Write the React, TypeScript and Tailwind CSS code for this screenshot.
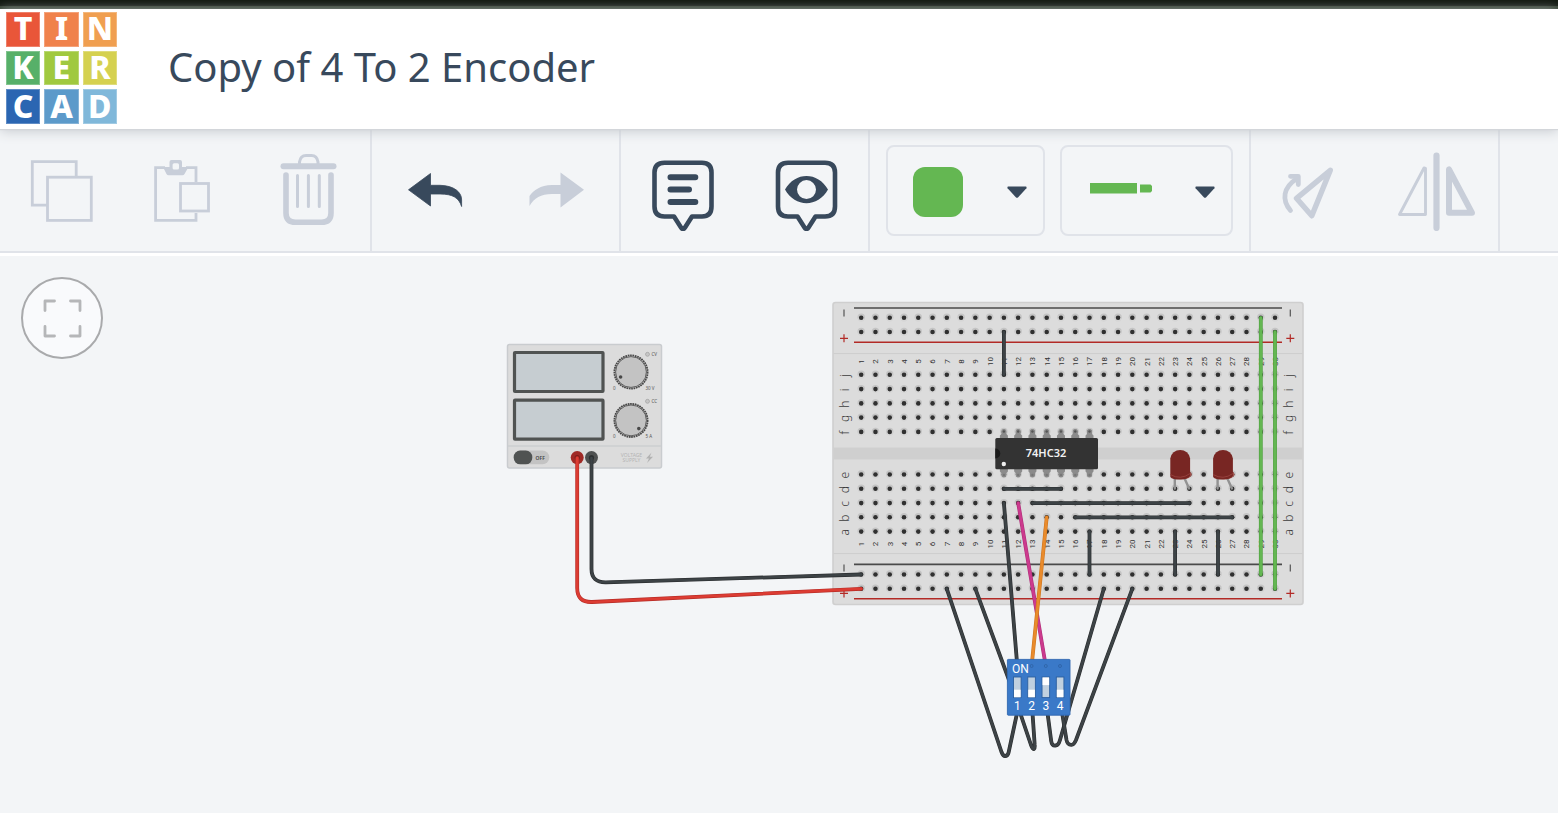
import React from "react";

const LOGO = [
  { letter: "T", tile: "bg-[#e95639]" },
  { letter: "I", tile: "bg-[#f0824c]" },
  { letter: "N", tile: "bg-[#f09f50]" },
  { letter: "K", tile: "bg-[#57b069]" },
  { letter: "E", tile: "bg-[#a0c93f]" },
  { letter: "R", tile: "bg-[#d5d150]" },
  { letter: "C", tile: "bg-[#2b66b2]" },
  { letter: "A", tile: "bg-[#5c9aca]" },
  { letter: "D", tile: "bg-[#80b8da]" },
];

function Logo() {
  return (
    <a
      href="#"
      aria-label="Tinkercad"
      className="grid h-28 w-[111px] shrink-0 grid-cols-3 grid-rows-3 gap-1"
    >
      {LOGO.map((t) => (
        <span
          key={t.letter}
          className={`flex items-center justify-center border border-white/25 pb-[2px] font-['Noto_Sans',sans-serif] text-[32px] leading-8 font-extrabold text-white ${t.tile}`}
        >
          {t.letter}
        </span>
      ))}
    </a>
  );
}

type ToolProps = {
  label: string;
  x: number;
  disabled?: boolean;
  children: React.ReactNode;
};

/* Every tool glyph is drawn on an 81-unit square whose origin is (x, 150). */
function Tool({ label, x, disabled, children }: ToolProps) {
  return (
    <button
      type="button"
      aria-label={label}
      title={label}
      disabled={disabled}
      className={`flex w-[123px] items-center justify-center ${disabled ? "text-[#c8ced9]" : "text-[#38495c]"}`}
    >
      <svg viewBox={`${x} 150 81 81`} className="size-[81px]" fill="none" stroke="currentColor" aria-hidden="true">
        {children}
      </svg>
    </button>
  );
}

function Group({ children }: { children: React.ReactNode }) {
  return <div className="flex border-r-2 border-[#e0e3e9]">{children}</div>;
}

function Caret() {
  return (
    <svg viewBox="0 0 20 12" className="h-3 w-5" aria-hidden="true">
      <path d="M1.2 0.6H18.8Q20 0.8 19.4 2.2L11.2 11.2Q10 12.2 8.8 11.2L0.6 2.2Q0 0.8 1.2 0.6Z" fill="#38495c" />
    </svg>
  );
}

function Toolbar() {
  return (
    <div
      role="toolbar"
      aria-label="Circuit tools"
      className="flex h-[124px] border-b-2 border-[#e0e3e9] bg-[#f3f5f7]"
    >
      <Group>
        <Tool label="Copy" x={21} disabled>
          <path d="M76.2 176.5V161.7H32.3V205.2H47" strokeWidth="2.8" />
          <rect x="47.5" y="177.2" width="43.8" height="43.2" strokeWidth="2.8" />
        </Tool>
        <div className="flex w-[124px]">
          <Tool label="Paste" x={144} disabled>
            <path d="M165 167.7H155.6V220.4H196V213M196 182V167.7H186" strokeWidth="2.8" />
            <rect x="180.5" y="183.5" width="28" height="27.5" strokeWidth="2.8" />
            <path
              d="M163 167H169.5V162Q169.5 160 171.5 160H180Q182 160 182 162V167H188.5L184.5 174Q183.8 175.3 182.5 175.3H168.5Q167.2 175.3 166.5 174Z"
              fill="currentColor"
              stroke="none"
            />
            <rect x="172.6" y="163.2" width="6.4" height="6.4" rx="1.5" fill="#f3f5f7" stroke="none" />
          </Tool>
        </div>
        <Tool label="Delete" x={268} disabled>
          <path d="M299.5 165V162Q300.5 155.5 306 155.5H311.5Q317 155.5 318 162V165" strokeWidth="3" />
          <path d="M283.5 166.3H333.5" strokeWidth="6" strokeLinecap="round" />
          <path d="M286 175V213Q286 222.3 295.5 222.3H321.5Q331 222.3 331 213V175" strokeWidth="5.6" strokeLinecap="round" />
          <path d="M297.5 175.5V206.5M308.4 175.5V206.5M319.3 175.5V206.5" strokeWidth="3" strokeLinecap="round" />
        </Tool>
      </Group>

      <Group>
        <Tool label="Undo" x={393}>
          <path
            d="M408.5 189.8L430.5 173.5V185.3H440C454 185.5 462 192.5 461.6 200V206.5C459 198 453 194 440 194H430.5V206Z"
            fill="currentColor"
            strokeWidth="0.8"
            strokeLinejoin="round"
          />
        </Tool>
        <div className="flex w-[124px]">
          <Tool label="Redo" x={516} disabled>
            <path
              d="M584 189.8L560.5 172.5V185H552C540 185.5 534 190 529.5 196V206C534 198 541 194 552 194H560.5V207.5Z"
              fill="currentColor"
              stroke="none"
            />
          </Tool>
        </div>
      </Group>

      <Group>
        <Tool label="Notes" x={642}>
          <path
            d="M664.5 162.7H702Q711.500 162.700 711.500 172.500V206.500Q711.500 216.500 702 216.500H692L685 227.500Q683 230.500 681 227.500L674 216.500H664.500Q654.500 216.500 654.500 206.500V172.500Q654.500 162.700 664.500 162.700Z"
            strokeWidth="4.6"
            strokeLinejoin="round"
          />
          <path d="M670.5 177.3H695.3M670.5 189.6H689M670.5 202H695.3" strokeWidth="6" strokeLinecap="round" />
        </Tool>
        <div className="flex w-[124px]">
          <Tool label="Toggle notes visibility" x={765}>
            <path
              d="M788 162.700H825Q835 162.700 835 172.500V206.500Q835 216.500 825 216.500H815.500L808.500 227.500Q806.500 230.500 804.500 227.500L797.500 216.500H788Q778 216.500 778 206.500V172.500Q778 162.700 788 162.700Z"
              strokeWidth="4.6"
              strokeLinejoin="round"
            />
            <path
              fillRule="evenodd"
              d="M785 189.6C795 171.5 818 171.5 828 189.6C818 207.8 795 207.8 785 189.6ZM797 189.6A9.5 9.5 0 1 0 816 189.6A9.5 9.5 0 1 0 797 189.6Z"
              fill="currentColor"
              stroke="none"
            />
          </Tool>
        </div>
      </Group>

      <Group>
        <div className="flex items-center gap-[15px] px-4">
          <button
            type="button"
            aria-label="Wire color"
            aria-haspopup="listbox"
            className="flex h-[91px] w-[159px] items-center justify-between rounded-lg border-2 border-[#e0e3e9] pt-1 pr-4 pl-[25px]"
          >
            <span className="size-[50px] rounded-xl bg-[#64b752]" />
            <Caret />
          </button>
          <button
            type="button"
            aria-label="Wire type"
            aria-haspopup="listbox"
            className="flex h-[91px] w-[173px] items-center justify-between rounded-lg border-2 border-[#e0e3e9] pt-1 pr-4 pl-7"
          >
            <svg viewBox="0 0 62 18" className="h-[18px] w-[62px]" fill="#64b752" aria-hidden="true">
              <rect x="0" y="0" width="47" height="10.5" />
              <path d="M50 1.5H60.5L62 3V8L60.5 9.5H50Z" />
            </svg>
            <Caret />
          </button>
        </div>
      </Group>

      <Group>
        <Tool label="Rotate" x={1272} disabled>
          <path d="M1330.300 170.300L1296.500 198.300L1311.800 215.800Z" strokeWidth="5.4" strokeLinejoin="round" />
          <path d="M1290.500 210.500C1281.500 200 1283 187.500 1297 178.500" strokeWidth="4.8" strokeLinecap="round" />
          <path d="M1290.500 176.300H1298.300V184.500" strokeWidth="4.8" strokeLinecap="round" strokeLinejoin="round" />
        </Tool>
        <div className="flex w-[124px]">
          <Tool label="Mirror" x={1395} disabled>
            <path d="M1425.500 168.500V214.500H1399.500L1424 168Z" strokeWidth="2.9" strokeLinejoin="round" />
            <path d="M1436.500 155.500V228" strokeWidth="6.2" strokeLinecap="round" />
            <path d="M1449 169.500V212.800H1472Z" strokeWidth="6" strokeLinejoin="round" />
          </Tool>
        </div>
      </Group>
    </div>
  );
}

const PITCH = 14.27;
const colX = (n: number) => 861.2 + (n - 1) * PITCH;
const COLS = Array.from({ length: 30 }, (_, i) => i + 1);
const ROWS: [string, number][] = [
  ["j", 374.8],
  ["i", 389.1],
  ["h", 403.4],
  ["g", 417.6],
  ["f", 431.9],
  ["e", 474.5],
  ["d", 488.8],
  ["c", 503.1],
  ["b", 517.3],
  ["a", 531.6],
];
const RAILS = [317.8, 332, 574.5, 588.8];
const HOLE_ROWS = [...RAILS, ...ROWS.map((r) => r[1])];

function Breadboard() {
  return (
    <g>
      <rect x="833" y="302.500" width="470" height="302" rx="2.5" fill="#dcdcdc" stroke="#cfcfcf" strokeWidth="1.6" />
      <rect x="833.5" y="447.5" width="469" height="12" fill="#cfcfcf" />
      <path d="M833.5 353.600H1302.500M833.500 553.600H1302.500" stroke="#cdcdcd" />
      <path d="M854 308H1282M854 564.400H1282" stroke="#4a4a4a" strokeWidth="1.6" />
      <path d="M854 342.200H1282M854 598.800H1282" stroke="#b22a26" strokeWidth="1.4" />
      {HOLE_ROWS.map((y) =>
        COLS.map((n) => (
          <g key={`${n}-${y}`}>
            <circle cx={colX(n)} cy={y - 0.5} r="3.7" fill="#c4c4c4" />
            <circle cx={colX(n)} cy={y + 1} r="3" fill="#d6d6d6" />
            <circle cx={colX(n)} cy={y} r="2.3" fill="#303030" />
          </g>
        )),
      )}
      <g fill="#333" fontSize="8" textAnchor="middle" fontFamily="Roboto, sans-serif">
        {[361.6, 544].map((y) =>
          COLS.map((n) => (
            <text key={`${n}-${y}`} transform={`translate(${colX(n) + 2.9} ${y}) rotate(-90)`}>
              {n}
            </text>
          )),
        )}
      </g>
      <g fill="#3c3c3c" fontSize="12" textAnchor="middle" fontWeight="300">
        {ROWS.map(([name, y]) => (
          <React.Fragment key={name}>
            <text transform={`translate(849 ${y + 0.8}) rotate(-90)`}>{name}</text>
            <text transform={`translate(1293 ${y + 0.8}) rotate(-90)`}>{name}</text>
          </React.Fragment>
        ))}
      </g>
      <path d="M844 309.500V316.500M1290.300 309.500V316.500M844 564.500V571.500M1290.300 564.500V571.500" stroke="#555" strokeWidth="1.2" />
      <path
        d="M840 338.300H848M844 334.300V342.300M1286.300 338.300H1294.300M1290.300 334.300V342.300M840 593.400H848M844 589.400V597.400M1286.300 593.400H1294.300M1290.300 589.400V597.400"
        stroke="#b22a26"
        strokeWidth="1.2"
      />
    </g>
  );
}

function OrGateChip() {
  return (
    <g>
      {[11, 12, 13, 14, 15, 16, 17].map((n) => (
        <g key={n} transform={`translate(${colX(n)} 0)`}>
          <path d="M-4 439V435.500L-2.500 434V431.500A2.500 2.500 0 0 1 2.500 431.500V434L4 435.500V439Z" fill="#8b8b8b" />
          <path d="M-4 468V471.500L-2.500 473V475A2.500 2.500 0 0 0 2.500 475V473L4 471.500V468Z" fill="#8b8b8b" />
          <circle cy="431.5" r="1.2" fill="#555" />
          <circle cy="475" r="1.2" fill="#777" />
        </g>
      ))}
      <rect x="995.3" y="438" width="102.7" height="31.2" rx="1.5" fill="#333" />
      <path d="M995.3 448.500A5 5 0 0 1 995.300 458.500Z" fill="#1a1a1a" />
      <circle cx="1003.800" cy="464" r="2.2" fill="#ededed" />
      <text x="1046" y="457.3" textAnchor="middle" fontSize="11" fontWeight="600" fill="#f2f2f2">
        74HC32
      </text>
    </g>
  );
}

function Led({ x }: { x: number }) {
  return (
    <g transform={`translate(${x} 0)`}>
      <path d="M-5.5 479V488.500M4.500 479L8.800 488.500" stroke="#929292" strokeWidth="2.4" fill="none" strokeLinecap="round" />
      <ellipse cx="1" cy="474.5" rx="10.5" ry="4.8" fill="#a15650" />
      <path d="M-10 458.500A10 10 0 0 1 9.800 458.500V475.500Q8 479.600 0 479.600Q-8 479.600 -10 477Z" fill="#782623" />
      <path d="M-10 474.500Q0 480.500 9.800 473.500" stroke="#99423e" strokeWidth="0.9" fill="none" />
    </g>
  );
}

function Knob({ y, dot }: { y: number; dot: [number, number] }) {
  return (
    <g>
      <circle cx="631" cy={y} r="16.6" fill="#c5c5c5" stroke="#484848" strokeWidth="1.8" strokeDasharray="1.7 0.7" />
      <circle cx="631" cy={y} r="15.4" fill="#c3c3c3" stroke="#484848" strokeWidth="0.8" />
      <circle cx={dot[0]} cy={dot[1]} r="1.8" fill="#484848" />
    </g>
  );
}

function PowerSupply() {
  return (
    <g>
      <rect x="507.5" y="344.5" width="154" height="123.5" rx="2" fill="#dcdcdc" stroke="#c9cccf" strokeWidth="1.5" />
      <path d="M508 446H661" stroke="#cdcfd0" strokeWidth="1.4" />
      <rect x="514.5" y="352.5" width="88.5" height="39" rx="0.5" fill="#c6cdd1" stroke="#505352" strokeWidth="3.2" />
      <rect x="514.5" y="400.2" width="88.5" height="39" rx="0.5" fill="#c6cdd1" stroke="#505352" strokeWidth="3.2" />
      <Knob y={372} dot={[620.6, 377]} />
      <Knob y={420.4} dot={[638.8, 428.6]} />
      <circle cx="647.5" cy="354.3" r="2" fill="#c6c6c6" stroke="#999" strokeWidth="0.6" />
      <circle cx="647.5" cy="401.3" r="2" fill="#c6c6c6" stroke="#999" strokeWidth="0.6" />
      <g fill="#555" fontSize="4.5">
        <text x="651.5" y="356">CV</text>
        <text x="651.5" y="403">CC</text>
        <text x="613" y="390">0</text>
        <text x="645.5" y="390">30 V</text>
        <text x="613" y="437.5">0</text>
        <text x="645.5" y="437.5">5 A</text>
      </g>
      <rect x="513.7" y="450.5" width="35.6" height="13.8" rx="6.9" fill="#c3c3c3" />
      <rect x="513.7" y="450.5" width="18.6" height="13.8" rx="6.5" fill="#505352" />
      <text x="535.5" y="459.7" fontSize="5" fontWeight="600" fill="#3e3e3e">
        OFF
      </text>
      <g fill="#b4b4b4" fontSize="5" textAnchor="middle">
        <text x="631.5" y="456.600">VOLTAGE</text>
        <text x="631.5" y="462">SUPPLY</text>
      </g>
      <path d="M651.5 452.5L646 458.5H649L647 463L653 456.7H649.8Z" fill="#b2b2b2" />
      <circle cx="577.2" cy="457.6" r="6.5" fill="#a02a26" />
      <circle cx="577.2" cy="457.6" r="2.6" fill="#7c1d1b" />
      <circle cx="591.5" cy="457.6" r="6.5" fill="#4f5151" />
      <circle cx="591.5" cy="457.6" r="2.6" fill="#303232" />
    </g>
  );
}

type WireProps = { d: string; color?: string; edge?: string };

function Wire({ d, color = "#3d4346", edge = "#2b2e30" }: WireProps) {
  return (
    <g fill="none" strokeLinecap="round" strokeLinejoin="round">
      <path d={d} stroke={edge} strokeWidth="3.8" />
      <path d={d} stroke={color} strokeWidth="2.6" />
    </g>
  );
}

function DipSwitch() {
  const on = [false, false, true, false];
  return (
    <g>
      <rect x="1007.4" y="659.4" width="62.6" height="55.8" rx="0.8" fill="#3a79c8" stroke="#2f67b0" strokeWidth="0.9" />
      <g fill="none" stroke="#2c5f9f" strokeWidth="0.7">
        <circle cx="1031.6" cy="666" r="1.5" />
        <circle cx="1045.8" cy="666" r="1.5" />
        <circle cx="1060" cy="666" r="1.5" />
      </g>
      <text x="1012" y="673.3" fontSize="12" fill="#fff" fontFamily="Roboto, sans-serif">
        ON
      </text>
      {on.map((isOn, i) => {
        const x = 1017.3 + i * 14.27;
        return (
          <g key={i}>
            <rect x={x - 3.8} y="677" width="7.6" height="20.6" fill="#c0d0df" stroke="#2c5f9f" strokeWidth="0.9" />
            <rect x={x - 3.3} y={isOn ? 677.5 : 689.7} width="6.6" height="7.6" fill="#fff" />
            <text x={x} y="710" fontSize="12" textAnchor="middle" fill="#fff" fontFamily="Roboto, sans-serif">
              {i + 1}
            </text>
          </g>
        );
      })}
    </g>
  );
}

function Circuit() {
  return (
    <svg
      viewBox="500 295 810 470"
      role="img"
      aria-label="4 to 2 encoder circuit"
      className="absolute top-[39px] left-[500px] h-[470px] w-[810px] font-['Noto_Sans',sans-serif]"
    >
      <PowerSupply />
      <Breadboard />
      <OrGateChip />

      <Wire d="M577.2 458V588Q577.2 602.500 592 602L861.200 588.800" color="#dc3c33" edge="#b52c26" />
      <Wire d="M591.5 458V569Q591.500 582.600 606 582.300L861.200 574.500" />

      <Wire d="M1003.9 332V374.5" />
      <Wire d="M1003.9 488.8H1061" />
      <Wire d="M1032.5 503.1H1189.5" />
      <Wire d="M1075.3 517.4H1232.3" />
      <Wire d="M1089.5 531.6V574.5" />
      <Wire d="M1175.1 531.6V574.5" />
      <Wire d="M1218 531.6V574.5" />
      <Wire d="M1260.8 317.8V574.5" color="#64b752" edge="#4f9f40" />
      <Wire d="M1275 332V588.8" color="#64b752" edge="#4f9f40" />
      <Led x={1180.3} />
      <Led x={1223.1} />

      <Wire d="M946.8 588.8L1001.5 752Q1003 756 1005 756Q1007.8 756 1008.6 752.5L1017.3 712" />
      <Wire d="M975.4 588.8L1009 680L1031 745Q1032.5 749 1034 749Q1035 748 1034.7 745L1031.6 700" />
      <Wire d="M1103.8 588.8L1060 740Q1058.5 745.5 1055.5 745.5Q1051.8 746 1051.2 741L1045.8 700" />
      <Wire d="M1132.3 588.8L1076 740Q1074 744.8 1071.5 744.8Q1067.5 745 1066.5 740L1060 700" />
      <Wire d="M1003.9 503.1L1017.3 666" />
      <Wire d="M1018.2 503.1L1045.8 666" color="#cc3a8e" edge="#b02f79" />
      <Wire d="M1046.7 517.4L1031.6 666" color="#e98b2c" edge="#cf7620" />
      <DipSwitch />
    </svg>
  );
}

export default function App() {
  return (
    <div className="flex min-h-screen flex-col bg-white pb-2 font-['Noto_Sans',sans-serif]">
      <div className="h-[9px] border-b-3 border-[#2c392a] bg-[#0e150d]" />
      <header className="relative z-10 flex h-[120px] items-center gap-[51px] bg-white px-[6px] pb-[2px] shadow-[0_1px_1px_#d3d6da,0_2px_12px_#c4c8cd]">
        <Logo />
        <h1 className="pb-[2px] text-[40px] leading-[48px] text-[#38495c]">Copy of 4 To 2 Encoder</h1>
      </header>
      <Toolbar />
      <main className="relative mt-[3px] flex-1 bg-[#f3f5f7]">
        <button
          type="button"
          aria-label="Zoom to fit"
          title="Zoom to fit"
          className="mt-[21px] ml-[21px] flex size-[82px] items-center justify-center rounded-full border-2 border-[#a9aaac] bg-[#f9fafc]"
        >
          <svg viewBox="0 0 39 39" className="size-[39px]" fill="none" stroke="#b5b6b8" strokeWidth="2.8" strokeLinecap="round" strokeLinejoin="round" aria-hidden="true">
            <path d="M2 11.5V2H11.5M27.5 2H37V11.5M37 27.5V37H27.5M11.5 37H2V27.5" />
          </svg>
        </button>
        <Circuit />
      </main>
    </div>
  );
}
